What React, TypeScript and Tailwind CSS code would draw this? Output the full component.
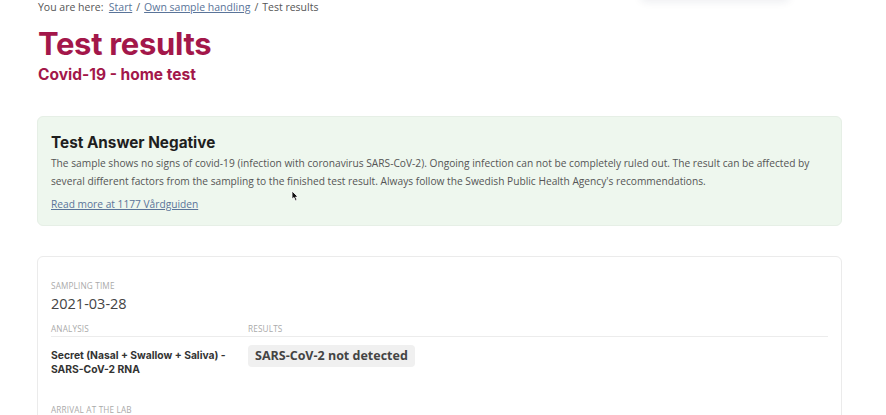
import React from "react"

const inter = "font-['Inter',sans-serif]"
const open = "font-['Open_Sans',sans-serif]"

function Label({ children }: { children: React.ReactNode }) {
  return <div className={`${open} text-[8.2px] uppercase tracking-[0.02em] text-[#aaaaaa] leading-[12px]`}>{children}</div>
}

export default function App() {
  return (
    <div className="relative w-[886px] h-[415px] overflow-hidden bg-white">
      {/* dropdown edge peeking in at the top */}
      <div className="absolute left-[640px] top-[-40px] w-[150px] h-[40px] rounded-b-md bg-white shadow-[0_2px_8px_rgba(30,40,80,0.08)]" />

      <div className="ml-[37px] w-[805px]">
        <div className={`${open} text-[10.5px] text-[#555] leading-[14px] pl-[1px]`}>
          You are here:&nbsp;{" "}
          <a className="text-[#5a7499] underline">Start</a>
          <span className="mx-[4px]">/</span>
          <a className="text-[#5a7499] underline">Own sample handling</a>
          <span className="mx-[4px]">/</span>
          Test results
        </div>

        <h1 className={`${inter} pl-[1px] mt-[12px] text-[31px] font-bold leading-[36px] text-[#a3174a] tracking-[-0.01em]`}>
          Test results
        </h1>
        <h2 className={`${inter} pl-[1px] mt-[3px] text-[15.5px] font-bold leading-[20px] text-[#a3174a]`}>
          Covid-19 - home test
        </h2>

        <div className="mt-[31px] rounded-[6px] border border-[#e6efe6] bg-[#eef7ee] px-[13px] pt-[16px] pb-[11px]">
          <h3 className={`${inter} text-[15.3px] font-bold leading-[20px] text-[#1e1e1e]`}>Test Answer Negative</h3>
          <p className={`${open} mt-[1px] text-[10.2px] leading-[18px] text-[#555]`}>
            The sample shows no signs of covid-19 (infection with coronavirus SARS-CoV-2). Ongoing infection can not be completely ruled out. The result can be affected by several different factors from the sampling to the finished test result. Always follow the Swedish Public Health Agency's recommendations.
          </p>
          <a className={`${open} mt-[4px] inline-block text-[10.2px] leading-[18px] text-[#5a7499] underline`}>
            Read more at 1177 Vårdguiden
          </a>
        </div>

        <div className="mt-[30px] rounded-[6px] border border-[#ebebeb] bg-white px-[13px] pt-[23px] h-[200px]">
          <Label>Sampling time</Label>
          <div className={`${open} mt-[2px] text-[14.5px] leading-[20px] text-[#444]`}>2021-03-28</div>

          <div className="mt-[9px] grid grid-cols-[197px_1fr] border-b border-[#ececec] pb-[1px]">
            <Label>Analysis</Label>
            <Label>Results</Label>
          </div>

          <div className="grid grid-cols-[197px_1fr] pt-[11px]">
            <div className={`${inter} text-[10.3px] font-bold leading-[14px] text-[#333]`}>
              Secret (Nasal + Swallow + Saliva) -<br />SARS-CoV-2 RNA
            </div>
            <div className="mt-[-6px]">
              <span className={`${open} inline-block rounded-[4px] bg-[#f0f0f0] px-[7px] py-[2px] text-[12.5px] font-bold leading-[18px] text-[#444]`}>
                SARS-CoV-2 not detected
              </span>
            </div>
          </div>

          <div className="mt-[29px]">
            <div className={`${open} text-[8.2px] uppercase tracking-[0.02em] text-[#aaaaaa] leading-[10px]`}>Arrival at the lab</div>
          </div>
        </div>
      </div>

      {/* mouse pointer */}
      <svg className="absolute left-[291px] top-[190px]" width="8" height="12" viewBox="0 0 8 12">
        <path d="M1 1 L1 9 L3 7.5 L4.5 11 L6 10.3 L4.6 7 L7 7 Z" fill="#111" stroke="#fff" strokeWidth="0.8" />
      </svg>
    </div>
  )
}
